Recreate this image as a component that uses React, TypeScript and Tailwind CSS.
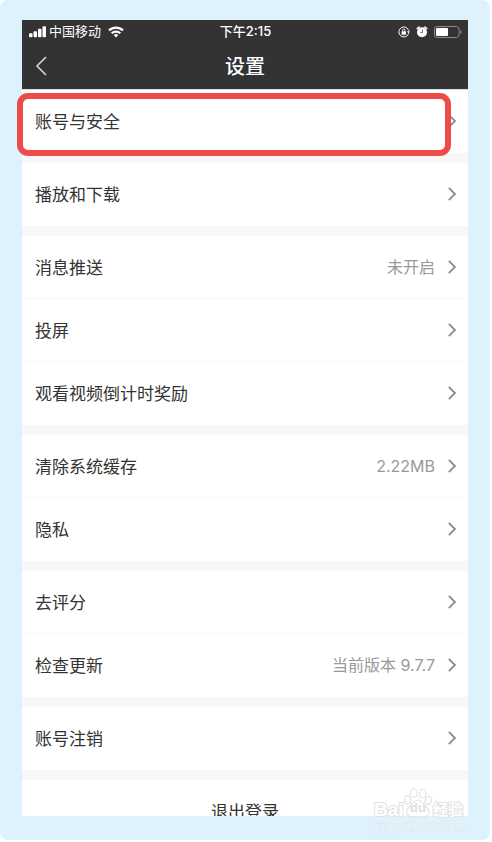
import type { ReactNode } from "react";

interface SettingItem {
	label: string;
	value?: string;
	highlighted?: boolean;
}

const groups: SettingItem[][] = [
	[{ label: "账号与安全", highlighted: true }],
	[{ label: "播放和下载" }],
	[
		{ label: "消息推送", value: "未开启" },
		{ label: "投屏" },
		{ label: "观看视频倒计时奖励" },
	],
	[{ label: "清除系统缓存", value: "2.22MB" }, { label: "隐私" }],
	[{ label: "去评分" }, { label: "检查更新", value: "当前版本 9.7.7" }],
	[{ label: "账号注销" }],
];

const SignalIcon = () => (
	<svg width="17" height="12" viewBox="0 0 17 12" fill="#fff" aria-hidden="true">
		<rect x="0" y="7.3" width="3.5" height="4" rx="1" />
		<rect x="4.5" y="5.3" width="3.5" height="6" rx="1" />
		<rect x="9" y="2.8" width="3.5" height="8.5" rx="1" />
		<rect x="13.5" y="0.3" width="3.5" height="11" rx="1" />
	</svg>
);

const WifiIcon = () => (
	<svg width="16" height="12" viewBox="0 0 16 12" fill="none" stroke="#fff" strokeWidth="2.2" aria-hidden="true">
		<path d="M1 4.4a10 10 0 0 1 14 0" />
		<path d="M3.7 7.3a6.1 6.1 0 0 1 8.6 0" />
		<path d="M8 11.4 5.7 9.1a3.3 3.3 0 0 1 4.6 0z" fill="#fff" stroke="none" />
	</svg>
);

const RotationLockIcon = () => (
	<svg width="12" height="12" viewBox="0 0 12 12" fill="none" stroke="#fff" aria-hidden="true">
		<path d="M10.6 7.6A5 5 0 1 1 10.7 4.6" strokeWidth="1" />
		<path d="M9 5.2h3L10.6 7.4z" fill="#fff" stroke="none" />
		<rect x="3.6" y="5.3" width="4.4" height="3.4" rx="0.4" fill="#fff" stroke="none" />
		<path d="M4.6 5.4V4.2a1.2 1.2 0 0 1 2.4 0v1.2" strokeWidth="0.9" />
	</svg>
);

const AlarmIcon = () => (
	<svg width="12" height="12" viewBox="0 0 12 12" fill="none" aria-hidden="true">
		<circle cx="6" cy="6.2" r="5" fill="#fff" />
		<path d="M1.2 2.6 3 1.1M10.8 2.6 9 1.1" stroke="#fff" strokeWidth="1.6" strokeLinecap="round" />
		<path d="M6.5 3.6v3H4.2" stroke="#555" strokeWidth="0.8" />
	</svg>
);

const BatteryIcon = () => (
	<svg width="28" height="12" viewBox="0 0 28 12" aria-hidden="true">
		<rect x="0.5" y="0.5" width="24.5" height="11" rx="2.6" fill="none" stroke="#8d8d8d" />
		<rect x="2" y="2" width="12" height="8" rx="1" fill="#fff" />
		<path d="M26.3 4v4q1.3-.6 1.3-2t-1.3-2z" fill="#8d8d8d" />
	</svg>
);

const Chevron = () => (
	<svg width="8" height="14" viewBox="0 0 8 14" fill="none" stroke="#8a8a8a" strokeWidth="1.8" aria-hidden="true">
		<path d="m0.8 0.8 6.2 6.2-6.2 6.2" />
	</svg>
);

const Row = ({ label, value, highlighted }: SettingItem) => (
	<li className="relative border-b border-[#f7f7f7] last:border-b-0">
		<button type="button" className="flex h-[62px] w-full items-center pr-3 pl-[13px] text-left">
			<span className="flex-1 pt-[3px] text-[17px] text-[#333]">{label}</span>
			{value && <span className="mr-[13px] text-base text-[#999]">{value}</span>}
			<Chevron />
		</button>
		{highlighted && (
			<div className="pointer-events-none absolute top-[3px] right-[17px] -bottom-1 -left-[5px] rounded-[11px] border-6 border-[#ed4a4a]" />
		)}
	</li>
);

const Group = ({ children }: { children: ReactNode }) => (
	<ul className="mb-[10px] bg-white pb-px">{children}</ul>
);

const Watermark = () => (
	<div className="pointer-events-none absolute right-6 bottom-2 w-[92px] font-['Liberation_Sans','Noto_Sans_CJK_SC',sans-serif] text-white">
		<div className="flex items-end leading-none">
			<span className="w-[29px] text-[19px] leading-5 font-bold [-webkit-text-stroke:2px_#e2e2e2] [paint-order:stroke_fill]">
				Bai
			</span>
			<div className="relative h-8 w-[30px]">
				<svg width="30" height="30" viewBox="0 0 28 29" fill="#fff" stroke="#e0e0e0" aria-hidden="true">
					<ellipse cx="4" cy="11.5" rx="3" ry="4" transform="rotate(-12 4 11.5)" />
					<ellipse cx="10" cy="5" rx="3.2" ry="4.2" />
					<ellipse cx="18.5" cy="5.3" rx="3.2" ry="4.2" transform="rotate(10 18.5 5.3)" />
					<ellipse cx="24" cy="12" rx="3" ry="4" transform="rotate(14 24 12)" />
					<path d="M13.8 11.5c-3.6 0-4.6 3.4-7 5.6C4.2 19.4 1.8 21.6 3.2 25.2c1.5 3.6 5.9 2.6 10.7 2.6s9.2 1 10.6-2.6c1.3-3.6-1-5.7-3.6-8-2.4-2.3-3.5-5.7-7.1-5.7z" />
				</svg>
				<span className="absolute inset-x-0 bottom-1 text-center text-[13px] leading-4 font-bold text-[#dedede]">
					du
				</span>
			</div>
			<span className="text-[15px] leading-5 font-bold [-webkit-text-stroke:2px_#e2e2e2] [paint-order:stroke_fill]">
				经验
			</span>
		</div>
		<p className="text-center text-[11px] leading-3 whitespace-nowrap text-[#eef8fe] [-webkit-text-stroke:1px_#d9e5ec] [paint-order:stroke_fill]">
			jingyan.baidu.com
		</p>
	</div>
);

export default function App() {
	return (
		<div className="bg-white pr-0.5 pb-0.5 font-['Inter','Noto_Sans_CJK_SC',sans-serif]">
			<div className="relative rounded-lg bg-[#def2fe] px-[22px] pt-5 pb-6">
				<main className="bg-[#f7f7f7]">
					<header className="border-b border-[#dcdcdc] bg-[#333] text-white">
						<div className="grid h-[23px] grid-cols-3 items-center pr-1.5 pl-[7px] text-[13px]">
							<div className="flex items-center gap-[3px]">
								<SignalIcon />
								<span>中国移动</span>
								<span className="ml-1">
									<WifiIcon />
								</span>
							</div>
							<span className="text-center font-medium">下午2:15</span>
							<div className="flex items-center justify-end gap-1.5">
								<RotationLockIcon />
								<AlarmIcon />
								<BatteryIcon />
							</div>
						</div>
						<div className="grid h-[46px] grid-cols-3 items-center px-[13px]">
							<button type="button" aria-label="返回">
								<svg width="12" height="20" viewBox="0 0 12 20" fill="none" stroke="#ddd" strokeWidth="1.5">
									<path d="M11 1 2 10l9 9" />
								</svg>
							</button>
							<h1 className="pt-0.5 text-center text-xl font-medium">设置</h1>
						</div>
					</header>
					{groups.map((items) => (
						<Group key={items[0].label}>
							{items.map((item) => (
								<Row key={item.label} {...item} />
							))}
						</Group>
					))}
					<div className="h-9 overflow-hidden bg-white">
						<button type="button" className="h-[62px] w-full pt-[3px] text-[17px] text-[#333]">
							退出登录
						</button>
					</div>
				</main>
				<Watermark />
			</div>
		</div>
	);
}
